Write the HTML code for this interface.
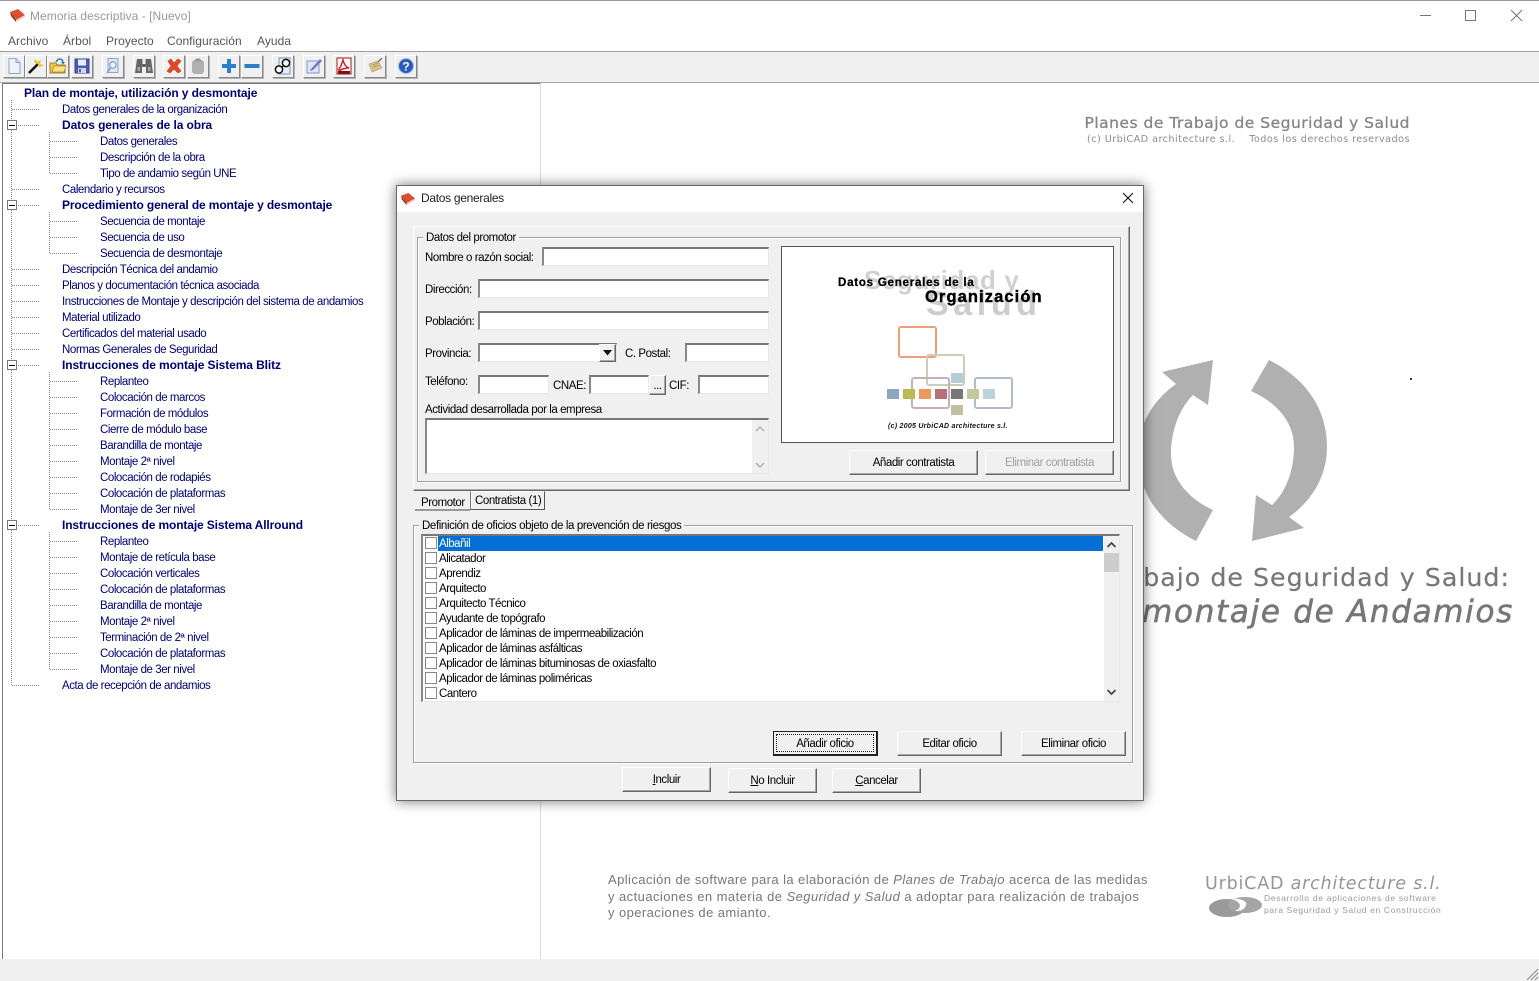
<!DOCTYPE html>
<html lang="es"><head><meta charset="utf-8"><title>Memoria descriptiva - [Nuevo]</title>
<style>
html,body{margin:0;padding:0}
body{position:relative;width:1539px;height:981px;overflow:hidden;background:#fff;font-family:"Liberation Sans",sans-serif;font-size:11.5px;letter-spacing:-.44px;color:#000}
.a{position:absolute;box-sizing:border-box}
.t{position:absolute;white-space:nowrap;line-height:16px;height:16px;margin-top:1px}
.n{color:#000070}
.b{color:#000070;font-weight:bold;font-size:12px;letter-spacing:-.1px;margin-top:0}
.tb{position:absolute;top:55px;width:22px;height:23px;box-sizing:border-box;background:#f0f0f0;border:1px solid;border-color:#fff #888 #888 #fff;box-shadow:1px 1px 0 #b4b4b4}
.tb svg{position:absolute;left:1px;top:1px;width:18px;height:18px}
.f{position:absolute;box-sizing:border-box;background:#fff;border-top:2px solid #777;border-left:2px solid #888;border-right:1px solid #e8e8e8;border-bottom:1px solid #e8e8e8}
.btn{position:absolute;box-sizing:border-box;background:#f0f0f0;border:1px solid;border-color:#fff #666 #666 #fff;box-shadow:inset -1px -1px 0 #a8a8a8;text-align:center;line-height:24px;white-space:nowrap}
.m{color:#555;font-size:12px;letter-spacing:.05px;margin-top:0}
.g{position:absolute;box-sizing:border-box;border:1px solid #a0a0a0;box-shadow:inset 1px 1px 0 #fff,1px 1px 0 #fff}
.bg{position:absolute;white-space:nowrap;font-family:"DejaVu Sans",sans-serif;letter-spacing:0;color:#777}
.l{position:absolute;white-space:nowrap;left:439px;line-height:15px;height:15px;margin-top:2px;letter-spacing:-.48px}
.c{position:absolute;left:425px;width:12px;height:12px;box-sizing:border-box;background:#fff;border:1px solid #888}
.s{position:absolute;width:12px;height:10px;top:389px}
.r{position:absolute;box-sizing:border-box;border:2px solid;border-radius:3px}
</style></head><body>

<!-- Title bar and menu -->
<div class="a" style="left:0;top:0;width:1539px;height:1px;background:#999"></div>
<svg class="a" style="left:9px;top:7px" width="17" height="16" viewBox="0 0 17 16"><path d="M1 5 L9 2 L16 8 L7 13 Z" fill="#dc5030"/><path d="M1 5 L7 13 L7 15 L2 9 Z" fill="#8f2a1c"/><path d="M7 13 L16 8 L16 10 L7 15 Z" fill="#e9d4c8"/></svg>
<div class="t m" style="left:30px;top:8px;color:#999">Memoria descriptiva - [Nuevo]</div>
<svg class="a" style="left:1418px;top:8px" width="110" height="14" viewBox="0 0 110 14" fill="none" stroke="#777"><path d="M2 7.5H13"/><rect x="47.5" y="2.5" width="10" height="10"/><path d="M93 2L104 13M104 2L93 13"/></svg>
<div class="t m" style="left:8px;top:33px">Archivo</div>
<div class="t m" style="left:63px;top:33px">Árbol</div>
<div class="t m" style="left:106px;top:33px">Proyecto</div>
<div class="t m" style="left:167px;top:33px">Configuración</div>
<div class="t m" style="left:257px;top:33px">Ayuda</div>

<!-- Toolbar -->
<div class="a" style="left:0;top:51px;width:1539px;height:1px;background:#a0a0a0"></div>
<div class="a" style="left:0;top:52px;width:1539px;height:30px;background:#f0f0f0"></div>
<div class="a" style="left:0;top:82px;width:1539px;height:1px;background:#a8a8a8"></div>

<div class="tb" style="left:3px"><svg viewBox="0 0 18 18"><path d="M4 1.5H11L15 5.5V16.5H4Z" fill="#eef3fc" stroke="#8fa3cc"/><path d="M11 1.5V5.500H15" fill="#cfdcf2" stroke="#8fa3cc"/></svg></div>
<div class="tb" style="left:25px"><svg viewBox="0 0 18 18"><path d="M2 16L11 7" stroke="#111" stroke-width="2.6"/><path d="M11 7L13 5" stroke="#eee" stroke-width="2.6"/><path d="M7 4L9 2L10 5L14 3L13 7L17 8L13 10L11 9L11 7L8 6Z" fill="#e8c838"/></svg></div>
<div class="tb" style="left:47px"><svg viewBox="0 0 18 18"><path d="M1 6H7L8 8H16V16H1Z" fill="#f2c64a" stroke="#a8842a"/><path d="M3 15L5 9H17L15 15Z" fill="#fbe08a" stroke="#a8842a" stroke-width=".7"/><path d="M7 5C9 1 13 1 14 5" fill="none" stroke="#3a73c0" stroke-width="1.5"/><path d="M12 5H16L14 7.5Z" fill="#3a73c0"/></svg></div>
<div class="tb" style="left:71px"><svg viewBox="0 0 18 18"><path d="M2 2H16V16H2Z" fill="#4a5cb0" stroke="#3a4690"/><rect x="5" y="2.5" width="8" height="6" fill="#e8eefc"/><rect x="5" y="11" width="8" height="5" fill="#cfd6ea"/><rect x="6" y="12" width="2" height="3.5" fill="#4a5cb0"/></svg></div>
<div class="tb" style="left:102px"><svg viewBox="0 0 18 18"><path d="M4 1.5H14V15.5H4Z" fill="#dfe8f8" stroke="#8fa3cc"/><circle cx="9" cy="8" r="3.2" fill="#f5f8ff" stroke="#7d94c2" stroke-width="1.2"/><path d="M3 16L6.500 11" stroke="#8fa3cc" stroke-width="1.800"/></svg></div>
<div class="tb" style="left:133px"><svg viewBox="0 0 18 18"><path d="M2 2H7.500V7H10.500V2H16L18 16H11V10H7V16H0Z" fill="#666"/><rect x="2.500" y="10" width="2.500" height="4" fill="#aaa"/><rect x="13" y="10" width="2.500" height="4" fill="#aaa"/></svg></div>
<div class="tb" style="left:163px"><svg viewBox="0 0 18 18"><path d="M3 4L6 2L9 6L13 2L16 4L12 9L16 14L13 16L9 12L5 16L2 14L6 9Z" fill="#e2492a" stroke="#c04020" stroke-width=".6"/></svg></div>
<div class="tb" style="left:187px"><svg viewBox="0 0 18 18"><path d="M5 3H13L15 5V15L13 17H5L3 15V5Z" fill="#b0b0b0"/><rect x="6.500" y="1.500" width="5" height="3" fill="#989898"/></svg></div>
<div class="tb" style="left:218px"><svg viewBox="0 0 18 18"><path d="M2 9H16M9 2V16" stroke="#2a80cc" stroke-width="4"/></svg></div>
<div class="tb" style="left:241px"><svg viewBox="0 0 18 18"><path d="M1.500 9H16.500" stroke="#2a80cc" stroke-width="4"/></svg></div>
<div class="tb" style="left:272px"><svg viewBox="0 0 18 18"><path d="M5 1H16V17H5Z" fill="#e6edf8" stroke="#7d94c2"/><circle cx="5" cy="12.500" r="3.600" fill="#fff" stroke="#111" stroke-width="1.500"/><circle cx="12" cy="6" r="3.600" fill="#fff" stroke="#111" stroke-width="1.500"/><path d="M8 10L9.500 8.500" stroke="#111" stroke-width="1.500"/></svg></div>
<div class="tb" style="left:303px"><svg viewBox="0 0 18 18"><path d="M2 4H14V16H2Z" fill="#dfe3f6" stroke="#8d94c4"/><path d="M6 12L15 2L17 4L8 13L5 14Z" fill="#6d7abc"/></svg></div>
<div class="tb" style="left:333px"><svg viewBox="0 0 18 18"><path d="M2 1H16V17H2Z" fill="#fff" stroke="#a01818"/><path d="M4 12C6 10 7 6 8 3C9 7 11 10 14 11C10 11 7 12 4 14Z" fill="none" stroke="#d02020" stroke-width="1.500"/><rect x="3" y="14" width="12" height="2.500" fill="#7a1010"/></svg></div>
<div class="tb" style="left:364px"><svg viewBox="0 0 18 18"><path d="M3 7L12 4L16 11L6 15Z" fill="#d8c48a" stroke="#b8a668" stroke-width=".7"/><path d="M6 8L12 6M7 10L13 8" stroke="#9f8f58" stroke-width=".8"/><path d="M12 5L16 1" stroke="#777" stroke-width="1.400"/></svg></div>
<div class="tb" style="left:395px"><svg viewBox="0 0 18 18"><circle cx="9" cy="9" r="7.500" fill="#2a5cc0" stroke="#a8c0e8"/><text x="9" y="13.500" text-anchor="middle" font-family="Liberation Sans" font-weight="bold" font-size="12" letter-spacing="0" fill="#fff">?</text></svg></div>

<!-- Tree panel -->
<div class="a" style="left:2px;top:83px;width:539px;height:876px;border-left:1px solid #777;border-top:1px solid #777;border-right:1px solid #ddd"></div>
<svg class="a" style="left:0;top:84px" width="100" height="620" viewBox="0 84 100 620" fill="none" stroke="#8a8a8a" stroke-dasharray="1 1">
<path d="M11.500 100V685M49.500 132V173M49.500 212V253M49.500 372V509M49.500 532V669"/>
<path d="M12 109.500H40M16 125.500H40M12 189.500H40M16 205.500H40M12 269.500H40M12 285.500H40M12 301.500H40M12 317.500H40M12 333.500H40M12 349.500H40M16 365.500H40M16 525.500H40M12 685.500H40"/>
<path d="M50 141.500H78M50 157.500H78M50 173.500H78M50 221.500H78M50 237.500H78M50 253.500H78M50 381.500H78M50 397.500H78M50 413.500H78M50 429.500H78M50 445.500H78M50 461.500H78M50 477.500H78M50 493.500H78M50 509.500H78M50 541.500H78M50 557.500H78M50 573.500H78M50 589.500H78M50 605.500H78M50 621.500H78M50 637.500H78M50 653.500H78M50 669.500H78"/>
</svg>
<svg class="a" style="left:7px;top:120px" width="10" height="10"><rect x=".5" y=".5" width="9" height="9" fill="#fff" stroke="#777"/><path d="M2 5.500H8" stroke="#000"/></svg>
<svg class="a" style="left:7px;top:200px" width="10" height="10"><rect x=".5" y=".5" width="9" height="9" fill="#fff" stroke="#777"/><path d="M2 5.500H8" stroke="#000"/></svg>
<svg class="a" style="left:7px;top:360px" width="10" height="10"><rect x=".5" y=".5" width="9" height="9" fill="#fff" stroke="#777"/><path d="M2 5.500H8" stroke="#000"/></svg>
<svg class="a" style="left:7px;top:520px" width="10" height="10"><rect x=".5" y=".5" width="9" height="9" fill="#fff" stroke="#777"/><path d="M2 5.500H8" stroke="#000"/></svg>

<div class="t b" style="left:24px;top:85px">Plan de montaje, utilización y desmontaje</div>
<div class="t n" style="left:62px;top:101px">Datos generales de la organización</div>
<div class="t b" style="left:62px;top:117px">Datos generales de la obra</div>
<div class="t n" style="left:100px;top:133px">Datos generales</div>
<div class="t n" style="left:100px;top:149px">Descripción de la obra</div>
<div class="t n" style="left:100px;top:165px">Tipo de andamio según UNE</div>
<div class="t n" style="left:62px;top:181px">Calendario y recursos</div>
<div class="t b" style="left:62px;top:197px;letter-spacing:-.13px">Procedimiento general de montaje y desmontaje</div>
<div class="t n" style="left:100px;top:213px">Secuencia de montaje</div>
<div class="t n" style="left:100px;top:229px">Secuencia de uso</div>
<div class="t n" style="left:100px;top:245px">Secuencia de desmontaje</div>
<div class="t n" style="left:62px;top:261px">Descripción Técnica del andamio</div>
<div class="t n" style="left:62px;top:277px">Planos y documentación técnica asociada</div>
<div class="t n" style="left:62px;top:293px">Instrucciones de Montaje y descripción del sistema de andamios</div>
<div class="t n" style="left:62px;top:309px">Material utilizado</div>
<div class="t n" style="left:62px;top:325px">Certificados del material usado</div>
<div class="t n" style="left:62px;top:341px">Normas Generales de Seguridad</div>
<div class="t b" style="left:62px;top:357px">Instrucciones de montaje Sistema Blitz</div>
<div class="t n" style="left:100px;top:373px">Replanteo</div>
<div class="t n" style="left:100px;top:389px">Colocación de marcos</div>
<div class="t n" style="left:100px;top:405px">Formación de módulos</div>
<div class="t n" style="left:100px;top:421px">Cierre de módulo base</div>
<div class="t n" style="left:100px;top:437px">Barandilla de montaje</div>
<div class="t n" style="left:100px;top:453px">Montaje 2ª nivel</div>
<div class="t n" style="left:100px;top:469px">Colocación de rodapiés</div>
<div class="t n" style="left:100px;top:485px">Colocación de plataformas</div>
<div class="t n" style="left:100px;top:501px">Montaje de 3er nivel</div>
<div class="t b" style="left:62px;top:517px;letter-spacing:-.13px">Instrucciones de montaje Sistema Allround</div>
<div class="t n" style="left:100px;top:533px">Replanteo</div>
<div class="t n" style="left:100px;top:549px">Montaje de retícula base</div>
<div class="t n" style="left:100px;top:565px">Colocación verticales</div>
<div class="t n" style="left:100px;top:581px">Colocación de plataformas</div>
<div class="t n" style="left:100px;top:597px">Barandilla de montaje</div>
<div class="t n" style="left:100px;top:613px">Montaje 2ª nivel</div>
<div class="t n" style="left:100px;top:629px">Terminación de 2ª nivel</div>
<div class="t n" style="left:100px;top:645px">Colocación de plataformas</div>
<div class="t n" style="left:100px;top:661px">Montaje de 3er nivel</div>
<div class="t n" style="left:62px;top:677px">Acta de recepción de andamios</div>

<!-- Splash background -->
<div class="bg" style="right:129px;top:114px;font-size:15.500px;line-height:18px;letter-spacing:.5px;color:#858585;-webkit-text-stroke:.3px #858585">Planes de Trabajo de Seguridad y Salud</div>
<div class="bg" style="right:129px;top:133px;font-size:9.700px;line-height:13px;letter-spacing:.44px;color:#8c8c8c;white-space:pre">(c) UrbiCAD architecture s.l.    Todos los derechos reservados</div>
<svg class="a" style="left:1130px;top:350px" width="210" height="200" viewBox="1130 350 210 200" fill="#b0b0b0">
<path d="M1269 360C1305 378 1327 408 1327 447C1327 475 1313 500 1289 517L1304 528L1252 541L1256 495L1272 505C1286 492 1294 470 1294 447C1294 423 1278 403 1251 391Z"/>
<path d="M1196 541C1160 523 1138 493 1138 454C1138 426 1152 401 1176 384L1162 372L1213 360L1208 405L1193 395C1179 409 1171 431 1171 454C1171 478 1187 498 1213 510Z"/>
</svg>
<div class="a" style="left:1410px;top:378px;width:2px;height:2px;background:#333"></div>
<div class="bg" style="right:29px;top:563px;font-size:25.300px;line-height:30px;letter-spacing:1px;color:#777;-webkit-text-stroke:.2px #777">Planes de Trabajo de Seguridad y Salud:</div>
<div class="bg" style="right:25px;top:594px;font-size:31px;line-height:36px;letter-spacing:1.700px;font-style:italic;color:#777;-webkit-text-stroke:.6px #777">Plan de montaje de Andamios</div>
<div class="bg" style="left:608px;top:871px;font-size:13px;line-height:17px;font-family:'Liberation Sans',sans-serif;letter-spacing:.42px;color:#777">Aplicación de software para la elaboración de <i>Planes de Trabajo</i> acerca de las medidas</div>
<div class="bg" style="left:608px;top:888px;font-size:13px;line-height:17px;font-family:'Liberation Sans',sans-serif;letter-spacing:.44px;color:#777">y actuaciones en materia de <i>Seguridad y Salud</i> a adoptar para realización de trabajos</div>
<div class="bg" style="left:608px;top:904px;font-size:13px;line-height:17px;font-family:'Liberation Sans',sans-serif;letter-spacing:.42px;color:#777">y operaciones de amianto.</div>
<div class="bg" style="left:1205px;top:873px;font-size:17.500px;line-height:22px;letter-spacing:.8px;color:#969696">UrbiCAD <i>architecture s.l.</i></div>
<div class="bg" style="left:1264px;top:892px;font-size:8.500px;line-height:12px;color:#999;font-family:'Liberation Sans',sans-serif;letter-spacing:.7px">Desarrollo de aplicaciones de software</div>
<div class="bg" style="left:1264px;top:904px;font-size:8.500px;line-height:12px;color:#999;font-family:'Liberation Sans',sans-serif;letter-spacing:.65px">para Seguridad y Salud en Construcción</div>
<svg class="a" style="left:1207px;top:894px" width="58" height="26" viewBox="0 0 58 26"><ellipse cx="20" cy="14" rx="18" ry="9" fill="#9a9a9a"/><ellipse cx="38" cy="11" rx="17" ry="8" fill="#a5a5a5"/><path d="M24 5C36 4 42 8 38 13C36 17 30 17 28 17C36 14 34 7 24 5Z" fill="#fff"/></svg>

<!-- Status bar -->
<div class="a" style="left:0;top:959px;width:1539px;height:22px;background:#f0f0f0"></div>
<svg class="a" style="left:1526px;top:968px" width="13" height="13" fill="none" stroke="#8a8a8a"><path d="M12 1L1 12M12 5L5 12M12 9L9 12"/></svg>

<!-- Dialog -->
<div class="a" style="left:396px;top:185px;width:748px;height:616px;background:#f0f0f0;border:1px solid #6a6a6a;box-shadow:0 0 12px rgba(0,0,0,.55)"></div>
<div class="a" style="left:397px;top:186px;width:746px;height:26px;background:#fff"></div>
<svg class="a" style="left:400px;top:191px" width="16" height="15" viewBox="0 0 17 16"><path d="M1 5 L9 2 L16 8 L7 13 Z" fill="#dc5030"/><path d="M1 5 L7 13 L7 15 L2 9 Z" fill="#8f2a1c"/><path d="M7 13 L16 8 L16 10 L7 15 Z" fill="#e9d4c8"/></svg>
<div class="t" style="left:421px;top:190px;margin-top:0;font-size:12px;letter-spacing:-.3px;color:#222">Datos generales</div>
<svg class="a" style="left:1122px;top:192px" width="12" height="12" fill="none" stroke="#111" stroke-width="1.100"><path d="M1 1L11 11M11 1L1 11"/></svg>

<!-- Tab page -->
<div class="a" style="left:413px;top:226px;width:717px;height:265px;border:1px solid;border-color:#fff #666 #666 #fff;box-shadow:inset -1px -1px 0 #a8a8a8"></div>
<div class="g" style="left:417px;top:237px;width:704px;height:245px"></div>
<div class="t" style="left:423px;top:229px;background:#f0f0f0;padding:0 3px">Datos del promotor</div>

<div class="t" style="left:425px;top:249px">Nombre o razón social:</div><div class="f" style="left:542px;top:247px;width:227px;height:19px"></div>
<div class="t" style="left:425px;top:281px">Dirección:</div><div class="f" style="left:478px;top:279px;width:291px;height:19px"></div>
<div class="t" style="left:425px;top:313px">Población:</div><div class="f" style="left:478px;top:311px;width:291px;height:19px"></div>
<div class="t" style="left:425px;top:345px">Provincia:</div><div class="f" style="left:478px;top:343px;width:139px;height:19px"></div>
<div class="btn" style="left:599px;top:344px;width:17px;height:18px"></div>
<svg class="a" style="left:602px;top:350px" width="11" height="6"><path d="M1 0H10L5.500 5.500Z" fill="#111"/></svg>
<div class="t" style="left:625px;top:345px">C. Postal:</div><div class="f" style="left:685px;top:343px;width:84px;height:19px"></div>
<div class="t" style="left:425px;top:373px">Teléfono:</div><div class="f" style="left:478px;top:375px;width:71px;height:19px"></div>
<div class="t" style="left:553px;top:377px">CNAE:</div><div class="f" style="left:589px;top:375px;width:60px;height:19px"></div>
<div class="btn" style="left:649px;top:375px;width:17px;height:20px;line-height:20px">...</div>
<div class="t" style="left:669px;top:377px">CIF:</div><div class="f" style="left:698px;top:375px;width:71px;height:19px"></div>
<div class="t" style="left:425px;top:401px">Actividad desarrollada por la empresa</div>
<div class="f" style="left:425px;top:418px;width:344px;height:56px"></div>
<div class="a" style="left:752px;top:420px;width:16px;height:53px;background:#f0f0f0"></div>
<svg class="a" style="left:754px;top:425px" width="12" height="44" fill="none" stroke="#b8b8b8" stroke-width="1.600"><path d="M2 6L6 2L10 6M2 38L6 42L10 38"/></svg>

<!-- Image -->
<div class="a" style="left:781px;top:246px;width:333px;height:197px;background:#fff;border:1px solid #555"></div>
<div class="t" style="left:864px;top:265px;height:28px;line-height:28px;font-size:26px;font-weight:bold;letter-spacing:.6px;color:#d0d0d0">Seguridad y</div>
<div class="t" style="left:926px;top:288px;height:30px;line-height:30px;font-size:34px;font-weight:bold;letter-spacing:4.600px;color:#cdcdcd">Salud</div>
<div class="t" style="left:838px;top:274px;font-size:11.500px;font-weight:bold;letter-spacing:.78px;color:#000;-webkit-text-stroke:.3px #000">Datos Generales de la</div>
<div class="t" style="left:925px;top:288px;font-size:16.500px;font-weight:bold;letter-spacing:1.100px;color:#000;-webkit-text-stroke:.4px #000">Organización</div>
<div class="r" style="left:898px;top:326px;width:39px;height:32px;border-color:#ee9e78"></div>
<div class="r" style="left:926px;top:354px;width:39px;height:32px;border-color:#cfcdb8"></div>
<div class="r" style="left:911px;top:377px;width:39px;height:32px;border-color:#c9b0b8"></div>
<div class="r" style="left:974px;top:377px;width:39px;height:32px;border-color:#aebccb"></div>
<div class="s" style="left:887px;background:#8ba8c0"></div>
<div class="s" style="left:903px;background:#b9bb55"></div>
<div class="s" style="left:919px;background:#ee9760"></div>
<div class="s" style="left:935px;background:#b8707a"></div>
<div class="s" style="left:951px;background:#777"></div>
<div class="s" style="left:967px;background:#c5c79d"></div>
<div class="s" style="left:983px;background:#c0d0dc"></div>
<div class="s" style="left:951px;top:373px;background:#b8ccd8"></div>
<div class="s" style="left:951px;top:405px;background:#c0c0a0"></div>
<div class="t" style="left:888px;top:418px;font-size:7px;font-weight:bold;font-style:italic;letter-spacing:.26px;color:#111">(c) 2005 UrbiCAD architecture s.l.</div>
<div class="btn" style="left:849px;top:450px;width:129px;height:25px">Añadir contratista</div>
<div class="btn" style="left:985px;top:450px;width:129px;height:25px;color:#a0a0a0">Eliminar contratista</div>

<!-- Tabs -->
<div class="t" style="left:421px;top:494px">Promotor</div>
<div class="a" style="left:415px;top:509px;width:55px;height:2px;background:#999"></div>
<div class="a" style="left:470px;top:491px;width:75px;height:19px;border:1px solid;border-color:#fff #555 #555 #777;background:#f0f0f0;box-shadow:inset 1px 0 0 #fff"></div>
<div class="t" style="left:475px;top:492px">Contratista (1)</div>

<!-- Oficios -->
<div class="g" style="left:413px;top:525px;width:720px;height:238px"></div>
<div class="t" style="left:419px;top:517px;background:#f0f0f0;padding:0 3px;letter-spacing:-.38px">Definición de oficios objeto de la prevención de riesgos</div>
<div class="f" style="left:421px;top:534px;width:699px;height:168px"></div>
<div class="a" style="left:438px;top:536px;width:665px;height:15px;background:#0270d6"></div>
<div class="a" style="left:1104px;top:536px;width:15px;height:165px;background:#f0f0f0"></div>
<div class="a" style="left:1104px;top:553px;width:15px;height:19px;background:#cdcdcd"></div>
<svg class="a" style="left:1105px;top:540px" width="13" height="157" fill="none" stroke="#444" stroke-width="1.700"><path d="M2.500 7L6.500 3L10.500 7M2.500 150L6.500 154L10.500 150"/></svg>
<div class="c" style="top:537px"></div><div class="l" style="top:535px;color:#fff">Albañil</div>
<div class="c" style="top:552px"></div><div class="l" style="top:550px">Alicatador</div>
<div class="c" style="top:567px"></div><div class="l" style="top:565px">Aprendiz</div>
<div class="c" style="top:582px"></div><div class="l" style="top:580px">Arquitecto</div>
<div class="c" style="top:597px"></div><div class="l" style="top:595px">Arquitecto Técnico</div>
<div class="c" style="top:612px"></div><div class="l" style="top:610px">Ayudante de topógrafo</div>
<div class="c" style="top:627px"></div><div class="l" style="top:625px">Aplicador de láminas de impermeabilización</div>
<div class="c" style="top:642px"></div><div class="l" style="top:640px">Aplicador de láminas asfálticas</div>
<div class="c" style="top:657px"></div><div class="l" style="top:655px">Aplicador de láminas bituminosas de oxiasfalto</div>
<div class="c" style="top:672px"></div><div class="l" style="top:670px">Aplicador de láminas poliméricas</div>
<div class="c" style="top:687px"></div><div class="l" style="top:685px">Cantero</div>

<div class="btn" style="left:773px;top:731px;width:105px;height:25px;border:1px solid #222;border-bottom-width:2px;border-right-width:2px;box-shadow:none;line-height:25px"><span class="a" style="left:2px;top:2px;right:2px;bottom:2px;border:1px dotted #222"></span>Añadir oficio</div>
<div class="btn" style="left:897px;top:731px;width:105px;height:25px">Editar oficio</div>
<div class="btn" style="left:1021px;top:731px;width:105px;height:25px">Eliminar oficio</div>
<div class="btn" style="left:622px;top:767px;width:89px;height:25px"><u>I</u>ncluir</div>
<div class="btn" style="left:728px;top:768px;width:89px;height:25px"><u>N</u>o Incluir</div>
<div class="btn" style="left:832px;top:768px;width:89px;height:25px"><u>C</u>ancelar</div>
</body></html>
